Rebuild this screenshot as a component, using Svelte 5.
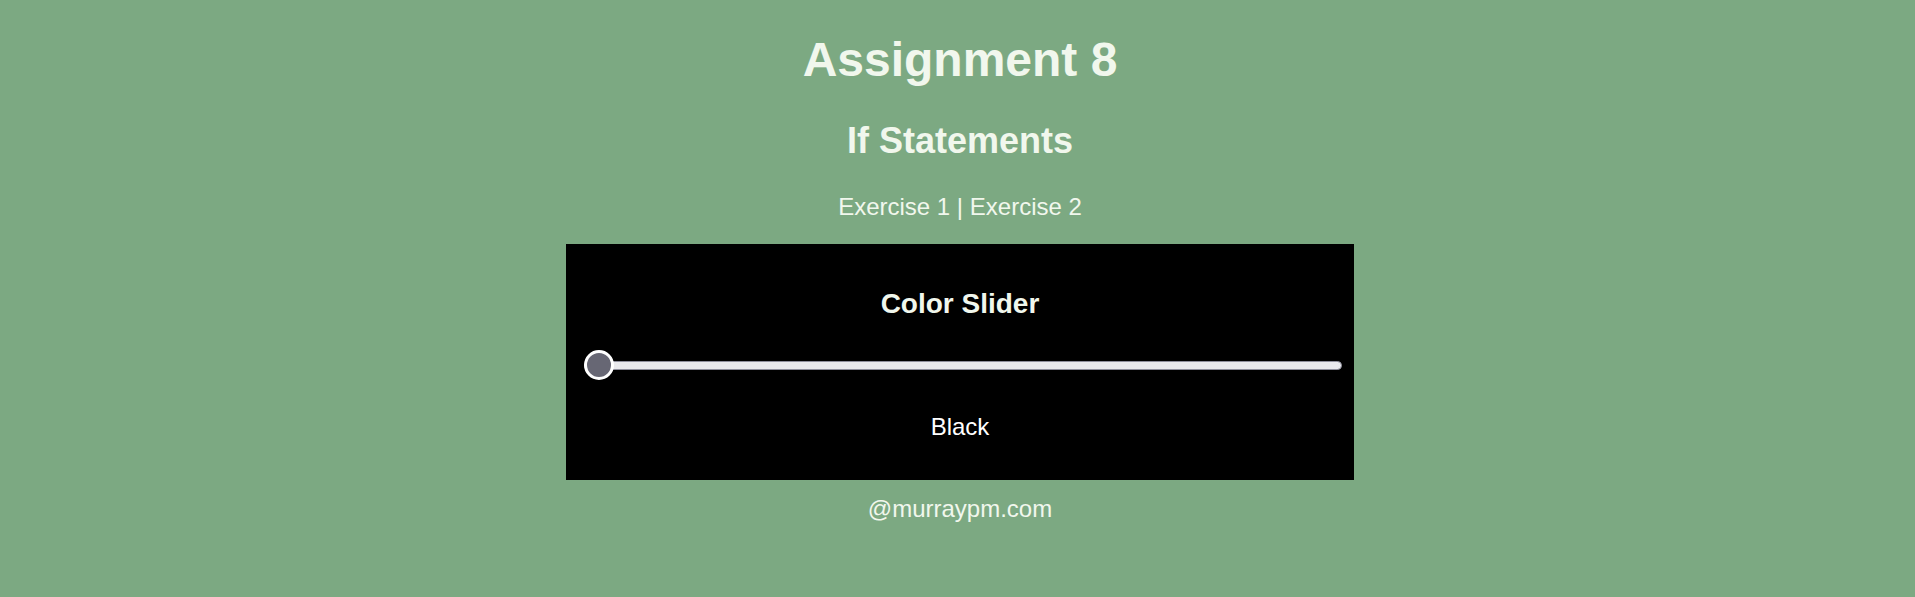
<script>
  const colors = ['Black', 'Red', 'Orange', 'Yellow', 'Green', 'Blue', 'Purple'];
  let value = $state(0);
  let name = $derived(colors[value]);
</script>

<div class="page">
  <h1>Assignment 8</h1>
  <h2>If Statements</h2>
  <nav><a href="#exercise-1">Exercise 1</a> | <a href="#exercise-2">Exercise 2</a></nav>
  <main id="exercise-1" style:background-color={name}>
    <h3><label for="color">Color Slider</label></h3>
    <input id="color" type="range" min="0" max={colors.length - 1} bind:value />
    <output for="color">{name}</output>
  </main>
  <footer><a href="#home">@murraypm.com</a></footer>
</div>

<style>
  :global(body) {
    margin: 0;
    background: #7ca982;
  }

  .page {
    display: flex;
    flex-direction: column;
    align-items: center;
    padding: 32px 0 24px 5px;
    color: #f1f7ed;
    font-family: "Liberation Sans", Arial, sans-serif;
    font-size: 24px;
    line-height: 28px;
    text-align: center;
  }

  h1,
  h2,
  h3 {
    margin: 0;
  }

  h1 {
    font-size: 48px;
    line-height: 56px;
  }

  h2 {
    margin: 33px 0 32px;
    font-size: 36px;
    line-height: 40px;
  }

  h3 {
    font-size: 28px;
    line-height: 32px;
  }

  a {
    color: inherit;
    text-decoration: none;
  }

  main {
    box-sizing: border-box;
    display: flex;
    flex-direction: column;
    width: 100%;
    max-width: 788px;
    margin: 23px 0 15px;
    padding: 44px 0 39px;
  }

  output {
    color: #fff;
  }

  input {
    appearance: none;
    height: 30px;
    margin: 30px 12px 33px 18px;
    background: transparent;
    cursor: pointer;
  }

  input::-webkit-slider-runnable-track {
    box-sizing: border-box;
    height: 9px;
    border: 1px solid #8f8f9d;
    border-radius: 5px;
    background: #e9e9ed;
  }

  input::-webkit-slider-thumb {
    appearance: none;
    box-sizing: border-box;
    width: 30px;
    height: 30px;
    margin: -12px 0 0 -1px;
    border: 3px solid #fff;
    border-radius: 50%;
    background: #676774;
  }
</style>
